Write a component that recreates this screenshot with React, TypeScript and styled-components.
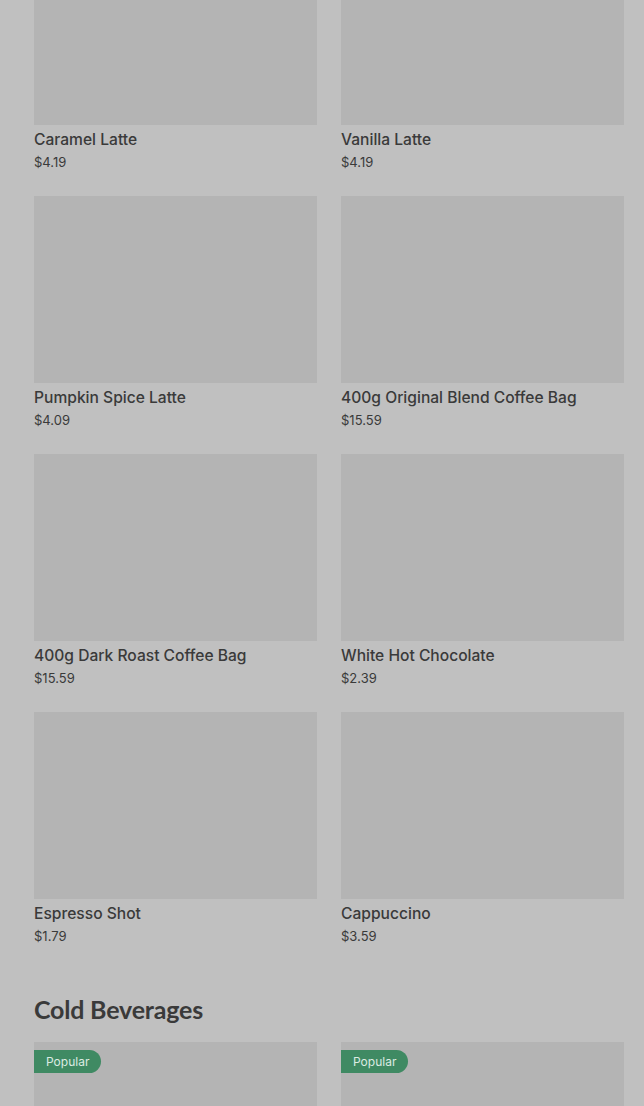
import React from "react";
import styled, { createGlobalStyle } from "styled-components";

const GlobalStyle = createGlobalStyle`
  html, body {
    margin: 0;
    padding: 0;
    background: #c0c0c0;
    overflow: hidden;
  }
  body {
    font-family: Inter, "Noto Sans", sans-serif;
    color: #3a3a3a;
  }
`;

const Page = styled.div`
  width: 644px;
  height: 1106px;
  overflow: hidden;
  box-sizing: border-box;
  padding: 0 20px 0 34px;
  background: #c0c0c0;
`;

const Section = styled.section<{ $shift?: number }>`
  margin-top: ${(p) => (p.$shift ? `${p.$shift}px` : "0")};
`;

const SectionTitle = styled.h2`
  margin: 47px 0 17px;
  font-family: Lato, "Noto Sans", sans-serif;
  font-weight: 700;
  font-size: 25px;
  line-height: 32px;
  letter-spacing: -0.2px;
  color: #3a3a3a;
`;

const Grid = styled.div`
  display: grid;
  grid-template-columns: 283px 283px;
  column-gap: 24px;
  row-gap: 24px;
`;

const Card = styled.div`
  display: flex;
  flex-direction: column;
`;

const Thumb = styled.div`
  position: relative;
  height: 187px;
  background: #b4b4b4;
`;

const Badge = styled.span`
  position: absolute;
  top: 8px;
  left: 0;
  height: 23px;
  padding: 0 12px;
  display: flex;
  align-items: center;
  background: #3f8a63;
  color: #dcebe2;
  font-size: 12px;
  border-radius: 0 12px 12px 0;
`;

const Name = styled.div`
  margin-top: 4px;
  font-size: 15.6px;
  font-weight: 500;
  line-height: 22px;
  color: #3a3a3a;
`;

const Price = styled.div`
  margin-top: 1px;
  font-size: 13px;
  line-height: 20px;
  color: #3a3a3a;
`;

type Item = { id: string; name?: string; price?: string; popular?: boolean };

const hot: Item[] = [
  { id: "h1", name: "Caramel Latte", price: "$4.19" },
  { id: "h2", name: "Vanilla Latte", price: "$4.19" },
  { id: "h3", name: "Pumpkin Spice Latte", price: "$4.09" },
  { id: "h4", name: "400g Original Blend Coffee Bag", price: "$15.59" },
  { id: "h5", name: "400g Dark Roast Coffee Bag", price: "$15.59" },
  { id: "h6", name: "White Hot Chocolate", price: "$2.39" },
  { id: "h7", name: "Espresso Shot", price: "$1.79" },
  { id: "h8", name: "Cappuccino", price: "$3.59" },
];

// only the tops of these cards are on screen
const cold: Item[] = [
  { id: "c1", popular: true },
  { id: "c2", popular: true },
];

const ProductCard: React.FC<{ item: Item }> = ({ item }) => (
  <Card>
    <Thumb>{item.popular && <Badge>Popular</Badge>}</Thumb>
    {item.name && <Name>{item.name}</Name>}
    {item.price && <Price>{item.price}</Price>}
  </Card>
);

export default function App() {
  return (
    <>
      <GlobalStyle />
      <Page>
        <Section $shift={-62}>
          <Grid>
            {hot.map((it) => (
              <ProductCard key={it.id} item={it} />
            ))}
          </Grid>
        </Section>
        <Section>
          <SectionTitle>Cold Beverages</SectionTitle>
          <Grid>
            {cold.map((it) => (
              <ProductCard key={it.id} item={it} />
            ))}
          </Grid>
        </Section>
      </Page>
    </>
  );
}
